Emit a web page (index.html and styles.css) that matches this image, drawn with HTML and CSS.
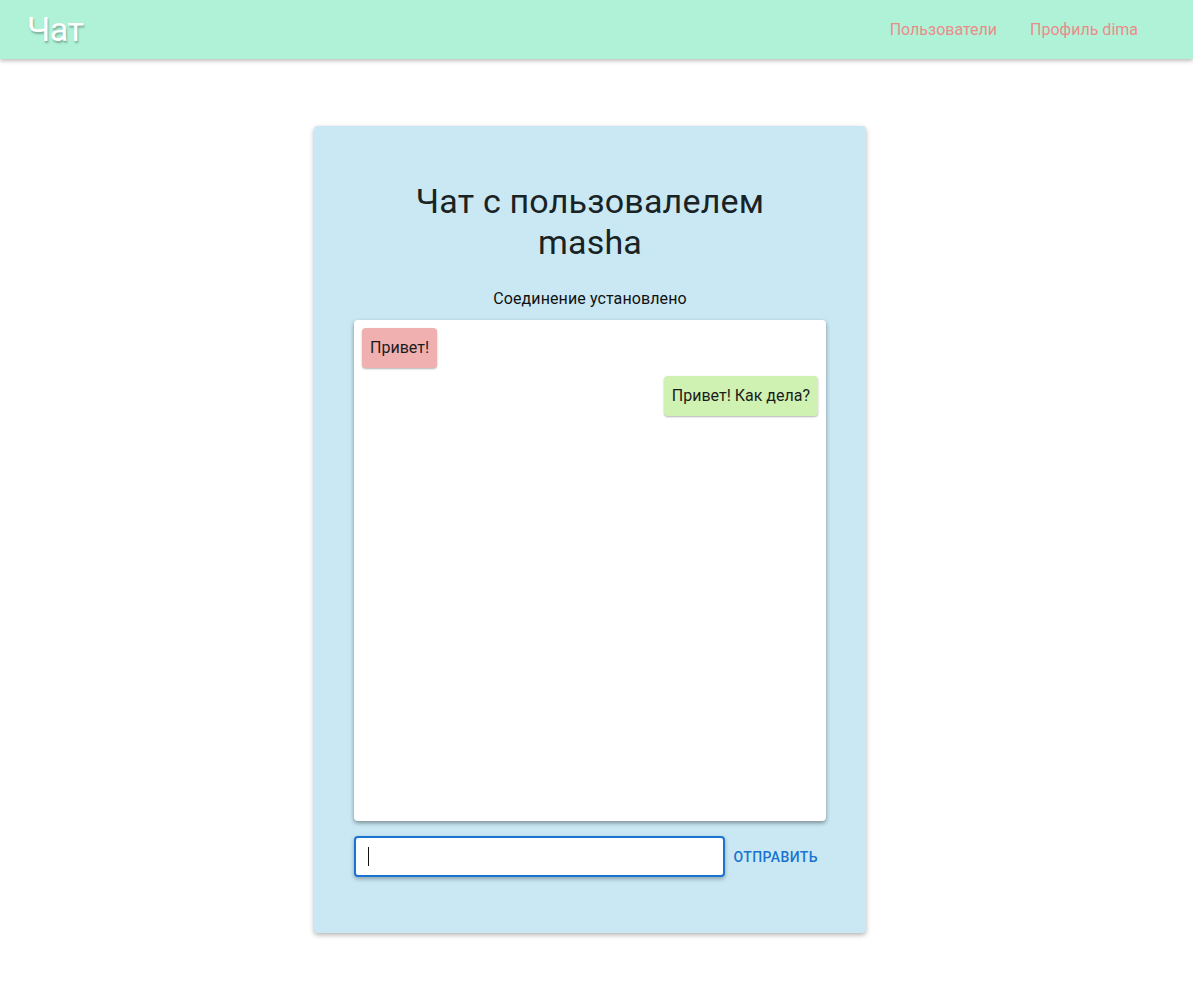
FILE: index.html
```html
<!DOCTYPE html>
<html lang="ru">
<head>
<meta charset="utf-8">
<title>Чат</title>
<link rel="stylesheet" href="styles.css">
</head>
<body>
<header class="topbar">
  <div class="brand">Чат</div>
  <nav class="nav">
    <a class="nav-link" href="#">Пользователи</a>
    <a class="nav-link" href="#">Профиль dima</a>
  </nav>
</header>
<main class="page">
  <section class="card">
    <h1 class="title">Чат с пользовалелем masha</h1>
    <p class="status">Соединение установлено</p>
    <div class="messages">
      <div class="msg msg-in">Привет!</div>
      <div class="msg msg-out">Привет! Как дела?</div>
    </div>
    <form class="composer">
      <div class="input"><span class="caret"></span></div>
      <button class="send" type="button">Отправить</button>
    </form>
  </section>
</main>
</body>
</html>
```

FILE: styles.css
```css
* { box-sizing: border-box; }
html, body { margin: 0; padding: 0; }
body {
  font-family: Roboto, "Noto Sans", "Liberation Sans", sans-serif;
  background: #fff;
  color: #1e2a2b;
}
.topbar {
  height: 59px;
  background: #b0f2d7;
  display: flex;
  align-items: center;
  justify-content: space-between;
  padding: 0 55px 0 27px;
  box-shadow: 0 2px 4px rgba(0,0,0,0.25);
  position: relative;
}
.brand {
  color: #fff;
  font-size: 34px;
  font-weight: 400;
  letter-spacing: -0.5px;
  text-shadow: 1px 2px 2px rgba(0,0,0,0.28);
  line-height: 1;
  margin-top: -2px;
}
.nav { display: flex; gap: 33px; }
.nav-link {
  color: #ea8c8c;
  text-decoration: none;
  font-size: 16px;
}
.page {
  display: flex;
  justify-content: center;
  padding: 67px 13px 20px 0;
}
.card {
  width: 552px;
  height: 807px;
  background: #c9e8f3;
  border-radius: 4px;
  box-shadow: 0 2px 5px rgba(0,0,0,0.3);
  padding: 55px 40px 56px;
  display: flex;
  flex-direction: column;
}
.title {
  margin: 0 auto;
  max-width: 400px;
  text-align: center;
  font-size: 34px;
  line-height: 41px;
  font-weight: 400;
  letter-spacing: 0.2px;
  color: #1a2324;
}
.status {
  margin: 26px 0 11px;
  text-align: center;
  font-size: 16px;
  line-height: 20px;
  letter-spacing: 0.1px;
  color: #111;
}
.messages {
  height: 501px;
  background: #fff;
  border-radius: 4px;
  box-shadow: 0 2px 4px rgba(0,0,0,0.4);
  padding: 8px;
  display: flex;
  flex-direction: column;
  gap: 8px;
}
.msg {
  font-size: 16px;
  line-height: 24px;
  padding: 8px;
  border-radius: 4px;
  color: #1c1c1c;
  box-shadow: 0 1px 2px rgba(0,0,0,0.3);
}
.msg-in { align-self: flex-start; background: #f1b0b0; }
.msg-out { align-self: flex-end; background: #cff2b2; }
.composer {
  margin: 15px 0 0;
  display: flex;
  align-items: center;
  gap: 1px;
}
.input {
  width: 371px;
  height: 41px;
  background: #fff;
  border: 2px solid #1a73d0;
  border-radius: 4px;
  box-shadow: 0 2px 4px rgba(0,0,0,0.3);
  display: flex;
  align-items: center;
  padding-left: 12px;
}
.caret {
  width: 1px;
  height: 19px;
  background: #111;
}
.send {
  flex: 1;
  background: none;
  border: 0;
  color: #1a73d0;
  font-family: Roboto, "Noto Sans", "Liberation Sans", sans-serif;
  font-size: 14px;
  font-weight: 500;
  text-transform: uppercase;
  letter-spacing: 0.4px;
  padding: 8px;
  text-align: left;
  cursor: pointer;
}
```
